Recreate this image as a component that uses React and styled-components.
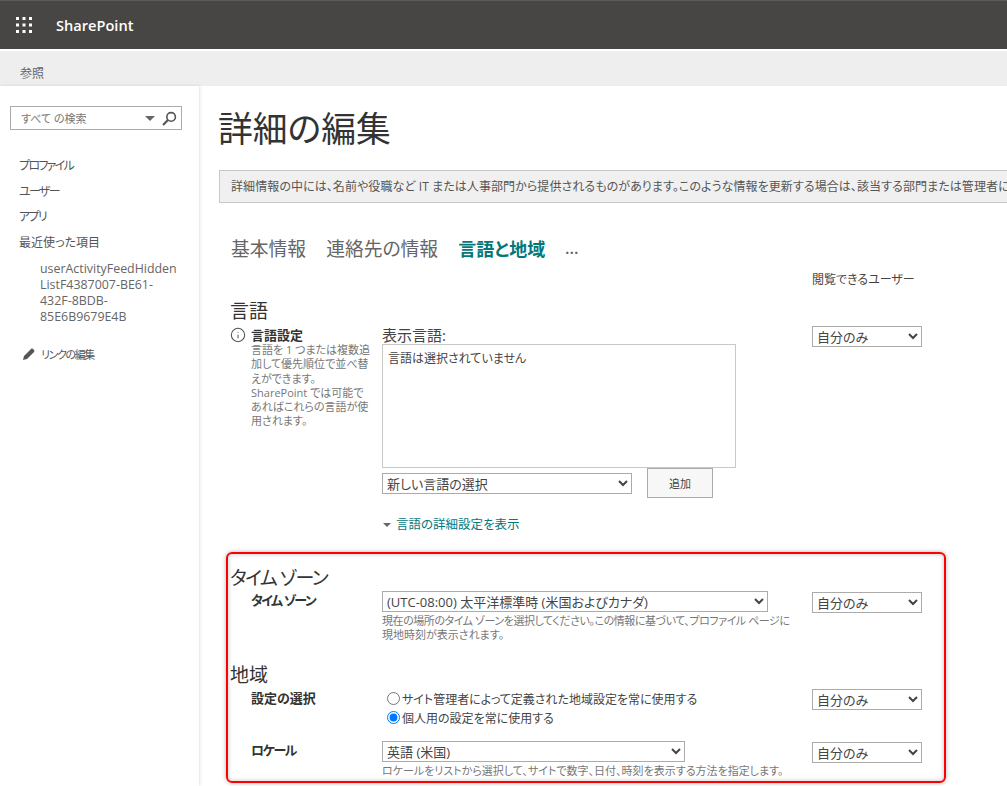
import React from 'react'
import styled, { createGlobalStyle } from 'styled-components'
import { Info } from 'lucide-react'

const GlobalStyle = createGlobalStyle`
html, body {
    margin: 0;
    height: 100%;
    overflow: hidden;
    background: #fff;
}
body {
    font-family: "Open Sans", "Noto Sans CJK JP", sans-serif;
    font-size: 12px;
    font-feature-settings: "palt";
    color: #444;
}
`

const Page = styled.div`
width: 1007px;
height: 786px;
overflow: hidden;
display: flex;
flex-direction: column;
`
const TopBar = styled.header`
height: 48px;
flex: none;
display: flex;
align-items: center;
background: #484644;
border-top: 1px solid #5c5a58;
`
const Waffle = styled.svg`
width: 16px;
height: 16px;
margin-left: 16px;
fill: #fff;
`
const Brand = styled.div`
margin-left: 24px;
font-family: "Open Sans", sans-serif;
font-size: 14.6px;
font-weight: 600;
color: #fff;
`
const Ribbon = styled.div`
height: 35px;
flex: none;
margin-top: 2px;
padding: 14px 0 0 20px;
box-sizing: border-box;
background: #eeeeee;
font-size: 12px;
line-height: 18px;
color: #666;
`
const Body = styled.div`
flex: 1;
display: flex;
min-height: 0;
`
const Sidebar = styled.aside`
width: 199px;
flex: none;
box-sizing: border-box;
padding: 20px 0 0 10px;
box-shadow: 1px 0 3px rgba(0, 0, 0, 0.12);
`
const SearchBox = styled.div`
width: 172px;
height: 24px;
box-sizing: border-box;
display: flex;
align-items: center;
padding: 0 4px 0 10px;
border: 1px solid #ababab;
font-size: 11px;
color: #777;
`
const SearchText = styled.span`
flex: 1;
`
const SearchCaret = styled.span`
width: 0;
height: 0;
margin-right: 7px;
border-left: 5px solid transparent;
border-right: 5px solid transparent;
border-top: 5px solid #666;
`
const SearchIcon = styled.svg`
width: 15px;
height: 15px;
fill: none;
stroke: #555;
`
const NavList = styled.nav`
margin-top: 23px;
padding-left: 9px;
`
const NavItem = styled.div`
height: 25.6px;
line-height: 25.6px;
font-size: 12px;
letter-spacing: ${({ $tight }) => ($tight ? '-1.7px' : '0')};
color: #555;
`
const NavSubItem = styled.div`
margin-top: 6px;
padding-left: 21px;
font-size: 12.4px;
line-height: 16px;
white-space: nowrap;
color: #666;
`
const EditLink = styled.div`
margin-top: 21px;
display: flex;
align-items: center;
gap: 5px;
padding-left: 3px;
font-size: 11px;
letter-spacing: -1.4px;
color: #555;
`
const PencilIcon = styled.svg`
width: 14px;
height: 14px;
fill: #555;
`
const Main = styled.main`
flex: 1;
min-width: 0;
padding: 22px 0 0 19px;
`
const Title = styled.h1`
margin: 0;
font-size: 34.8px;
line-height: 42px;
font-weight: 400;
color: #333;
`
const InfoBar = styled.div`
margin: 20px 0 0 1px;
height: 33px;
box-sizing: border-box;
padding-left: 11px;
line-height: 31px;
white-space: nowrap;
overflow: hidden;
background: #f0f0f0;
border: 1px solid #c8c8c8;
border-right: 0;
font-size: 12px;
letter-spacing: 0.08px;
color: #555;
`
const Form = styled.div`
padding-left: 13px;
`
const Tabs = styled.div`
margin-top: 32px;
display: flex;
align-items: center;
gap: 20px;
height: 26px;
`
const Tab = styled.span`
font-size: ${({ $active }) => ($active ? '18px' : '18.8px')};
font-weight: ${({ $active }) => ($active ? 700 : 400)};
color: ${({ $active }) => ($active ? '#03787c' : '#666')};
`
const More = styled.span`
font-size: 14px;
font-weight: 700;
letter-spacing: 0.5px;
color: #666;
`
const ViewerHeader = styled.div`
margin-top: 10px;
padding-left: 581px;
font-size: 12px;
line-height: 18px;
color: #444;
`
const SectionHeading = styled.h2`
margin: ${({ $top }) => $top}px 0 0 -1px;
font-size: 19px;
line-height: 24px;
font-weight: 400;
letter-spacing: ${({ $tight }) => ($tight ? '-1.5px' : '0')};
color: #333;
`
const FieldRow = styled.div`
margin-top: ${({ $top }) => $top || 0}px;
display: grid;
grid-template-columns: 151px 430px 110px;
`
const LabelCell = styled.div`
display: flex;
gap: 5px;
padding: ${({ $icon }) => ($icon ? '0' : '1px 0 0 20px')};
`
const InfoIcon = styled(Info)`
flex: none;
width: 16px;
height: 16px;
margin: 0 0 0 -1px;
color: #555;
`
const FieldLabel = styled.div`
font-size: 13px;
line-height: 16px;
font-weight: 700;
letter-spacing: ${({ $tight }) => ($tight ? '-1.5px' : '0')};
color: #333;
`
const LabelHelp = styled.div`
font-size: 11px;
line-height: 14.3px;
color: #777;
`
const DisplayLabel = styled.div`
font-size: 15px;
line-height: 17px;
color: #444;
`
const ChosenBox = styled.div`
width: 354px;
height: 124px;
box-sizing: border-box;
padding: 6px 5px;
border: 1px solid #c8c8c8;
font-size: 12px;
line-height: 16px;
color: #444;
`
const PickerRow = styled.div`
display: flex;
align-items: flex-start;
gap: 15px;
`
const Select = styled.select`
display: block;
width: ${({ $width }) => $width}px;
height: 21px;
margin-top: ${({ $top }) => $top || 0}px;
padding: 0;
box-sizing: border-box;
border: 1px solid #ababab;
border-radius: 0;
background: #fff;
font-family: inherit;
font-size: 13px;
font-feature-settings: "palt";
color: #444;
`
const AddButton = styled.button`
width: 66px;
height: 30px;
padding: 0;
border: 1px solid #ababab;
background: #f7f7f7;
font-family: inherit;
font-size: 11px;
color: #444;
`
const AdvancedLink = styled.div`
margin-top: 18px;
display: flex;
align-items: center;
gap: 5px;
font-size: 12.5px;
line-height: 18px;
color: #03787c;
`
const AdvancedCaret = styled.span`
width: 0;
height: 0;
margin-left: 1px;
border-left: 4px solid transparent;
border-right: 4px solid transparent;
border-top: 4px solid #666;
`
const Highlight = styled.section`
width: 720px;
height: 231px;
box-sizing: border-box;
margin: 18px 0 0 -5px;
padding: 12px 0 0 3px;
border: 2px solid #f00;
border-radius: 6px;
box-shadow: 0 0 4px rgba(0, 0, 0, 0.3), inset 0 0 4px rgba(0, 0, 0, 0.25);
`
const FieldHelp = styled.div`
margin-top: 2px;
font-size: 11px;
line-height: 14px;
white-space: nowrap;
color: #777;
`
const TightLine = styled.span`
letter-spacing: -0.45px;
`
const RadioRow = styled.label`
display: flex;
align-items: center;
gap: 2px;
height: 19px;
padding-left: 5px;
font-size: 12px;
color: #444;
`
const Radio = styled.input`
width: 13px;
height: 13px;
margin: 0;
`
const PrivacyOption = () => <option>自分のみ</option>

const Field = ({ label, tight, top, children, privacyTop = 0 }) => (
    <FieldRow $top={top}>
        <LabelCell><FieldLabel $tight={tight}>{label}</FieldLabel></LabelCell>
        <div>{children}</div>
        <Select $width={110} $top={privacyTop}><PrivacyOption /></Select>
    </FieldRow>
)

export default function App() {
    return (
        <Page>
            <GlobalStyle />
            <TopBar>
                <Waffle viewBox="0 0 16 16">
                    {[0, 6.5, 13].map(y => [0, 6.5, 13].map(x => (
                        <rect key={`${x}-${y}`} x={x} y={y} width="3" height="3" />
                    )))}
                </Waffle>
                <Brand>SharePoint</Brand>
            </TopBar>
            <Ribbon>参照</Ribbon>
            <Body>
                <Sidebar>
                    <SearchBox>
                        <SearchText>すべて の検索</SearchText>
                        <SearchCaret />
                        <SearchIcon viewBox="0 0 14 14">
                            <circle cx="8.5" cy="5.5" r="4" strokeWidth="1.5" />
                            <line x1="5.5" y1="8.5" x2="1" y2="13" strokeWidth="2" />
                        </SearchIcon>
                    </SearchBox>
                    <NavList>
                        <NavItem $tight>プロファイル</NavItem>
                        <NavItem $tight>ユーザー</NavItem>
                        <NavItem $tight>アプリ</NavItem>
                        <NavItem>最近使った項目</NavItem>
                        <NavSubItem>
                            userActivityFeedHidden<br />
                            ListF4387007-BE61-<br />
                            432F-8BDB-<br />
                            85E6B9679E4B
                        </NavSubItem>
                        <EditLink>
                            <PencilIcon viewBox="0 0 14 14">
                                <path d="M1 13l1-4 7-7c.6-.6 1.4-.6 2 0l1 1c.6.6.6 1.4 0 2l-7 7z" />
                            </PencilIcon>
                            リンクの編集
                        </EditLink>
                    </NavList>
                </Sidebar>
                <Main>
                    <Title>詳細の編集</Title>
                    <InfoBar>詳細情報の中には、名前や役職など IT または人事部門から提供されるものがあります。このような情報を更新する場合は、該当する部門または管理者に</InfoBar>
                    <Form>
                        <Tabs>
                            <Tab>基本情報</Tab>
                            <Tab>連絡先の情報</Tab>
                            <Tab $active>言語と地域</Tab>
                            <More>...</More>
                        </Tabs>
                        <ViewerHeader>閲覧できるユーザー</ViewerHeader>
                        <SectionHeading $top={10}>言語</SectionHeading>
                        <FieldRow $top={4}>
                            <LabelCell $icon>
                                <InfoIcon strokeWidth={1.6} />
                                <div>
                                    <FieldLabel>言語設定</FieldLabel>
                                    <LabelHelp>
                                        言語を 1 つまたは複数追<br />
                                        加して優先順位で並べ替<br />
                                        えができます。<br />
                                        SharePoint では可能で<br />
                                        あればこれらの言語が使<br />
                                        用されます。
                                    </LabelHelp>
                                </div>
                            </LabelCell>
                            <div>
                                <DisplayLabel>表示言語:</DisplayLabel>
                                <ChosenBox>言語は選択されていません</ChosenBox>
                                <PickerRow>
                                    <Select $width={250} $top={5}><option>新しい言語の選択</option></Select>
                                    <AddButton>追加</AddButton>
                                </PickerRow>
                                <AdvancedLink><AdvancedCaret />言語の詳細設定を表示</AdvancedLink>
                            </div>
                            <Select $width={110} $top={-1}><PrivacyOption /></Select>
                        </FieldRow>
                        <Highlight>
                            <SectionHeading $top={0} $tight>タイム ゾーン</SectionHeading>
                            <Field label="タイム ゾーン" tight top={1} privacyTop={1}>
                                <Select $width={386}><option>(UTC-08:00) 太平洋標準時 (米国およびカナダ)</option></Select>
                                <FieldHelp>
                                    <TightLine>現在の場所のタイム ゾーンを選択してください。この情報に基づいて、プロファイル ページに</TightLine><br />
                                    現地時刻が表示されます。
                                </FieldHelp>
                            </Field>
                            <SectionHeading $top={21}>地域</SectionHeading>
                            <Field label="設定の選択" top={2} privacyTop={0}>
                                <RadioRow><Radio type="radio" name="region" />サイト管理者によって定義された地域設定を常に使用する</RadioRow>
                                <RadioRow><Radio type="radio" name="region" defaultChecked />個人用の設定を常に使用する</RadioRow>
                            </Field>
                            <Field label="ロケール" tight top={14} privacyTop={1}>
                                <Select $width={303}><option>英語 (米国)</option></Select>
                                <FieldHelp>ロケールをリストから選択して、サイトで数字、日付、時刻を表示する方法を指定します。</FieldHelp>
                            </Field>
                        </Highlight>
                    </Form>
                </Main>
            </Body>
        </Page>
    )
}
